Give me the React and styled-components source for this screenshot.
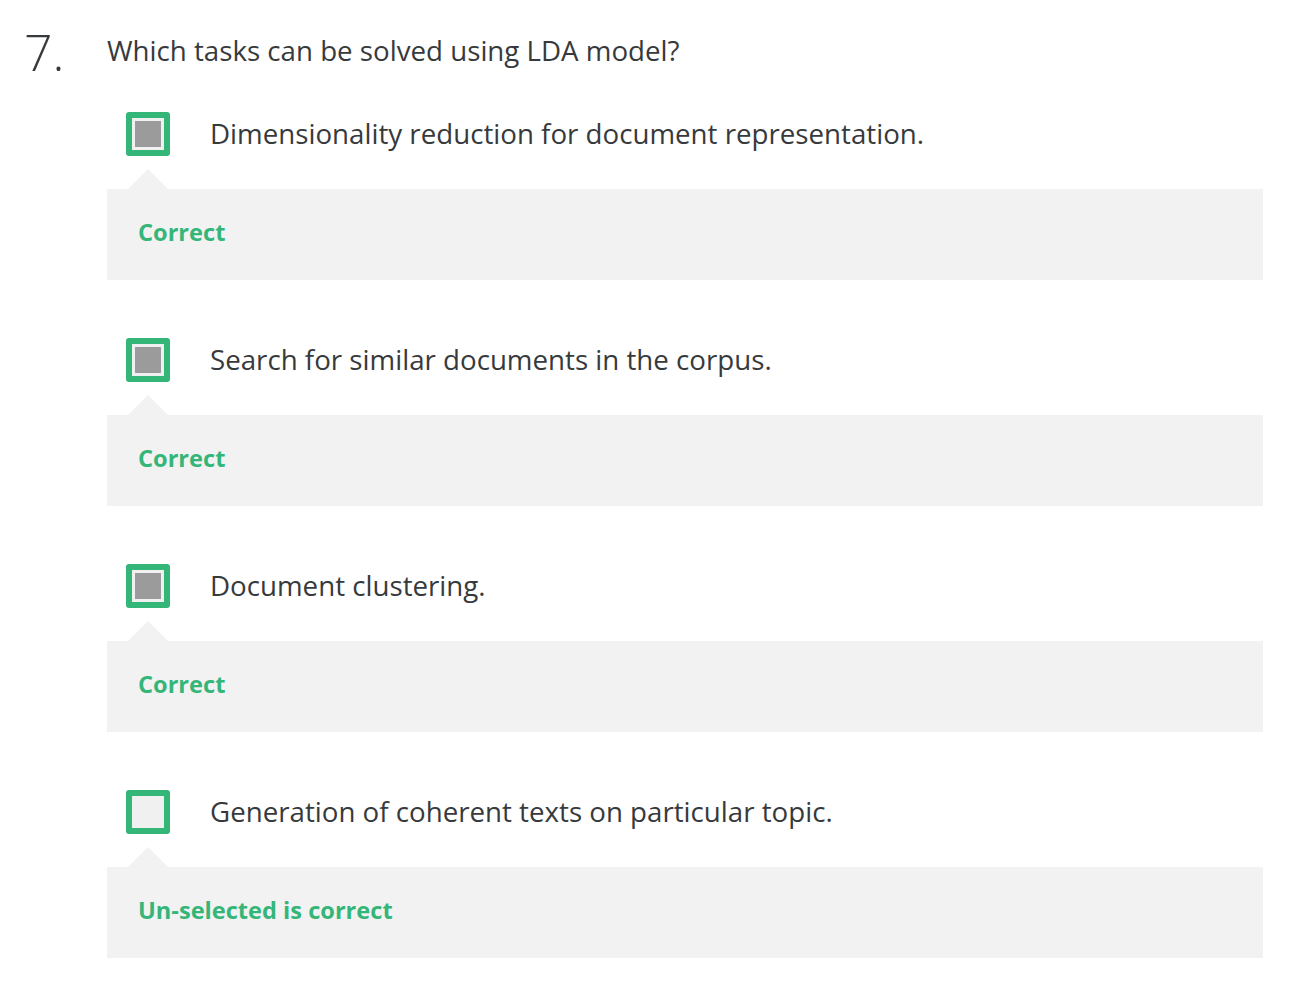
import React from 'react'
import styled, { createGlobalStyle } from 'styled-components';

const GlobalStyle = createGlobalStyle`
    body {
        margin: 0;
        background: #ffffff;
        font-family: "Open Sans", "Liberation Sans", sans-serif;
        color: #373a3c;
    }
`;

const SPage = styled.div`
    width: 1300px;
    box-sizing: border-box;
    padding: 0 37px 0 0;
`;

const SHeader = styled.div`
    display: flex;
    align-items: center;
    height: 104px;
`;

const SNumber = styled.div`
    width: 107px;
    flex-shrink: 0;
    box-sizing: border-box;
    padding-left: 24px;
    font-size: 50px;
    font-weight: 300;
    line-height: 1;
`;

const SQuestion = styled.div`
    font-size: 27.7px;
    line-height: 1;
    margin-top: -3px;
`;

const SList = styled.div`
    margin-left: 107px;
    margin-top: 8px;
    display: flex;
    flex-direction: column;
    gap: 58px;
`;

const SOption = styled.div`
    display: flex;
    flex-direction: column;
`;

const SChoice = styled.div`
    display: flex;
    align-items: center;
    gap: 40px;
    padding-left: 19px;
    height: 44px;
`;

const SCheckbox = styled.div`
    width: 44px;
    height: 44px;
    box-sizing: border-box;
    border: 6px solid #34b679;
    border-radius: 3px;
    background: #f0f0f0;
    padding: 3px;
    flex-shrink: 0;

    &::after {
        content: '';
        display: ${props => props.checked ? 'block' : 'none'};
        width: 100%;
        height: 100%;
        background: #9b9b9b;
    }
`;

const SLabel = styled.span`
    font-size: 27.7px;
    line-height: 1;
`;

const SFeedback = styled.div`
    position: relative;
    margin-top: 33px;
    height: 91px;
    box-sizing: border-box;
    padding: 0 31px 5px;
    background: #f2f2f2;
    display: flex;
    align-items: center;

    &::before {
        content: '';
        position: absolute;
        top: -20px;
        left: 21px;
        border-left: 20px solid transparent;
        border-right: 20px solid transparent;
        border-bottom: 20px solid #f2f2f2;
    }
`;

const SFeedbackText = styled.span`
    font-size: 23.6px;
    font-weight: 700;
    color: #34b679;
`;

const options = [
    { text: 'Dimensionality reduction for document representation.', checked: true, feedback: 'Correct' },
    { text: 'Search for similar documents in the corpus.', checked: true, feedback: 'Correct' },
    { text: 'Document clustering.', checked: true, feedback: 'Correct' },
    { text: 'Generation of coherent texts on particular topic.', checked: false, feedback: 'Un-selected is correct' },
];

const App = () => {
    return (
        <SPage>
            <GlobalStyle />
            <SHeader>
                <SNumber>7.</SNumber>
                <SQuestion>Which tasks can be solved using LDA model?</SQuestion>
            </SHeader>
            <SList>
                {options.map(option => (
                    <SOption key={option.text}>
                        <SChoice>
                            <SCheckbox checked={option.checked} />
                            <SLabel>{option.text}</SLabel>
                        </SChoice>
                        <SFeedback>
                            <SFeedbackText>{option.feedback}</SFeedbackText>
                        </SFeedback>
                    </SOption>
                ))}
            </SList>
        </SPage>
    )
}

export default App;
